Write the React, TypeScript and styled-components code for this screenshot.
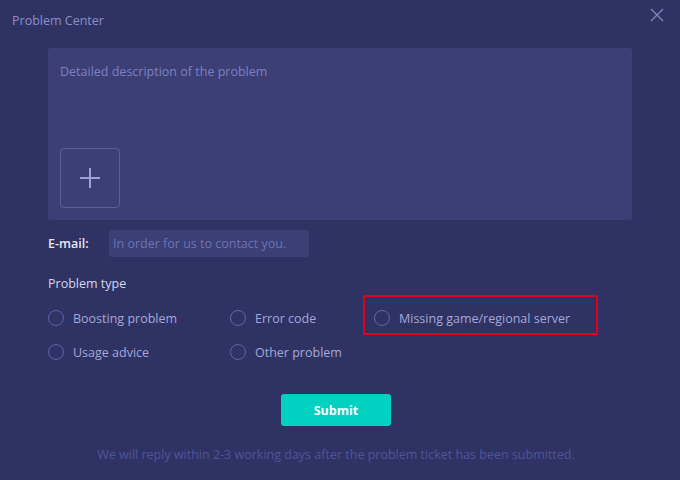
import React from "react";
import styled, { createGlobalStyle } from "styled-components";

const Global = createGlobalStyle`
  html, body { margin: 0; padding: 0; background: #2f3363; }
  body { font-family: "Open Sans", "Noto Sans", "Liberation Sans", sans-serif; }
  *, *::before, *::after { box-sizing: border-box; }
`;

const Window = styled.div`
  width: 680px;
  height: 480px;
  background: #2f3363;
  position: relative;
  display: flex;
  flex-direction: column;
`;

const Header = styled.div`
  height: 40px;
  display: flex;
  align-items: center;
  padding: 0 12px;
  justify-content: space-between;
`;

const Title = styled.span`
  font-size: 12.5px;
  color: #8a8fca;
`;

const Close = styled.button`
  width: 16px;
  height: 16px;
  padding: 0;
  margin: -10px 3px 0 0;
  border: none;
  background: none;
  display: flex;
  align-items: center;
  justify-content: center;
  cursor: pointer;
`;

const Body = styled.div`
  padding: 8px 48px 0;
  display: flex;
  flex-direction: column;
`;

const DescBox = styled.div`
  height: 172px;
  background: #3b3f74;
  border-radius: 3px;
  padding: 15px 12px 12px;
  display: flex;
  flex-direction: column;
  justify-content: space-between;
  align-items: flex-start;
`;

const Placeholder = styled.span<{ $color?: string }>`
  font-size: 12.5px;
  line-height: 18px;
  color: ${(p) => p.$color || "#7b81c6"};
`;

const AddBox = styled.div`
  width: 60px;
  height: 60px;
  border: 1px solid #5b609b;
  border-radius: 4px;
  display: flex;
  align-items: center;
  justify-content: center;
`;

const EmailRow = styled.div`
  margin-top: 10px;
  display: flex;
  align-items: center;
`;

const Label = styled.span`
  width: 61px;
  font-size: 12.5px;
  color: #e6e7f5;
  font-weight: 600;
`;

const Input = styled.div`
  width: 200px;
  height: 27px;
  background: #3b3f74;
  border-radius: 3px;
  display: flex;
  align-items: center;
  padding: 0 4px;
`;

const SectionTitle = styled.div`
  margin-top: 18px;
  font-size: 12.5px;
  line-height: 18px;
  color: #d4d6ee;
`;

const RadioGrid = styled.div`
  margin-top: 8px;
  display: grid;
  grid-template-columns: 182px 144px 1fr;
  grid-auto-rows: 34px;
  align-items: center;
`;

const RadioItem = styled.label<{ $marked?: boolean }>`
  display: flex;
  align-items: center;
  gap: 9px;
  font-size: 12.5px;
  color: #a4a8d8;
  position: relative;
  cursor: pointer;
  &::after {
    content: "";
    display: ${(p) => (p.$marked ? "block" : "none")};
    position: absolute;
    left: -11px;
    top: -15px;
    width: 235px;
    height: 40px;
    border: 2px solid #e0001b;
  }
`;

const Circle = styled.span`
  width: 16px;
  height: 16px;
  border-radius: 50%;
  border: 1px solid #5e63ab;
  flex: none;
`;

const SubmitRow = styled.div`
  margin-top: 25px;
  display: flex;
  justify-content: center;
  padding-right: 8px;
`;

const Submit = styled.button`
  width: 110px;
  height: 32px;
  border: none;
  border-radius: 3px;
  background: #00d1c1;
  color: #ffffff;
  font-family: inherit;
  font-size: 12.5px;
  font-weight: 700;
  cursor: pointer;
`;

const Footer = styled.div`
  margin-top: 20px;
  text-align: center;
  font-size: 12.5px;
  color: #4e549b;
  padding-right: 8px;
`;

const options: { label: string; marked?: boolean }[] = [
  { label: "Boosting problem" },
  { label: "Error code" },
  { label: "Missing game/regional server", marked: true },
  { label: "Usage advice" },
  { label: "Other problem" },
];

export default function App() {
  return (
    <>
      <Global />
      <Window>
        <Header>
          <Title>Problem Center</Title>
          <Close aria-label="close">
            <svg width="14" height="14" viewBox="0 0 14 14">
              <path d="M1 1L13 13M13 1L1 13" stroke="#7f86b9" strokeWidth="1.3" />
            </svg>
          </Close>
        </Header>
        <Body>
          <DescBox>
            <Placeholder>Detailed description of the problem</Placeholder>
            <AddBox>
              <svg width="20" height="20" viewBox="0 0 20 20">
                <path d="M10 0V20M0 10H20" stroke="#9ca1de" strokeWidth="2" />
              </svg>
            </AddBox>
          </DescBox>
          <EmailRow>
            <Label>E-mail:</Label>
            <Input>
              <Placeholder $color="#6d73b4">In order for us to contact you.</Placeholder>
            </Input>
          </EmailRow>
          <SectionTitle>Problem type</SectionTitle>
          <RadioGrid>
            {options.map((o) => (
              <RadioItem key={o.label} $marked={o.marked}>
                <Circle />
                {o.label}
              </RadioItem>
            ))}
          </RadioGrid>
          <SubmitRow>
            <Submit>Submit</Submit>
          </SubmitRow>
          <Footer>We will reply within 2-3 working days after the problem ticket has been submitted.</Footer>
        </Body>
      </Window>
    </>
  );
}
